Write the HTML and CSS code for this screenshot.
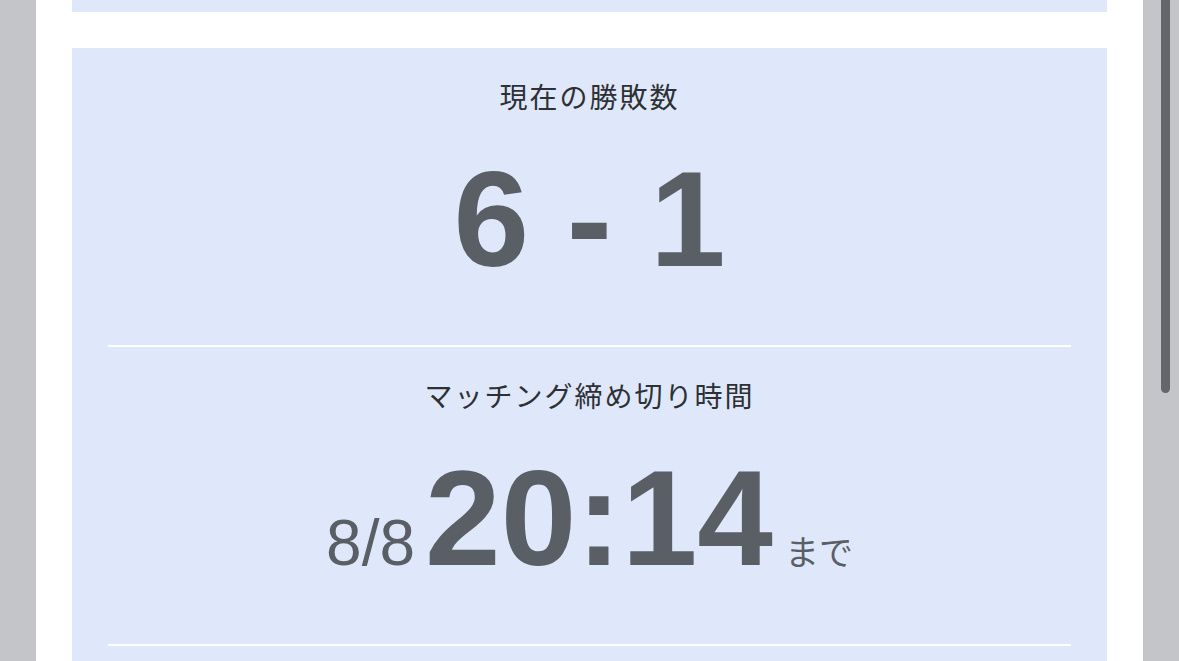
FILE: index.html
```html
<!DOCTYPE html>
<html lang="ja">
<head>
  <meta charset="UTF-8" />
  <meta name="viewport" content="width=device-width, initial-scale=1.0"/>
  <title>マッチング状況</title>
  <link rel="stylesheet" href="styles.css">
</head>
<body>

  <div class="page">
    <div class="card card-tail"></div>

    <div class="card">
      <div class="stat">
        <h3 class="stat-label">現在の勝敗数</h3>
        <div class="stat-value">6 - 1</div>
      </div>

      <div class="stat">
        <h3 class="stat-label">マッチング締め切り時間</h3>
        <div class="stat-value">
          <span class="date">8/8</span><span class="time">20:14</span><span class="until">まで</span>
        </div>
      </div>
    </div>
  </div>

  <div class="scroll-thumb"></div>

</body>
</html>
```

FILE: styles.css
```css
body {
  margin: 0;
  padding: 0;
  font-family: 'Liberation Sans', 'Noto Sans CJK JP', sans-serif;
  background-color: #c4c5c9;
  overflow: hidden;
}

.page {
  margin: 0 36px;
  padding: 0 36px;
  min-height: 100vh;
  background-color: #ffffff;
}

.card {
  background-color: #dfe8fa;
  padding: 0 36px 60px;
  margin-top: 36px;
}

/* bottom edge of the card above, the rest is scrolled away */
.card-tail {
  margin-top: 0;
  padding: 0;
  height: 12px;
}

.stat {
  padding: 33px 0 58px;
  border-bottom: 2px solid #ffffff;
  text-align: center;
}

.stat-label {
  margin: 0;
  font-size: 28px;
  line-height: 36px;
  font-weight: normal;
  letter-spacing: 2px;
  color: #2e3034;
}

.stat-value {
  margin-top: 34px;
  height: 136px;
  font-size: 136px;
  line-height: 1;
  font-weight: bold;
  color: #5a5e65;
}

.stat-value .date {
  font-size: 64px;
  font-weight: normal;
  margin-right: 10px;
}

.stat-value .until {
  font-size: 34px;
  font-weight: normal;
  margin-left: 12px;
}

.scroll-thumb {
  position: absolute;
  top: -20px;
  right: 9px;
  width: 9px;
  height: 413px;
  border-radius: 5px;
  background-color: #65666b;
}
```
